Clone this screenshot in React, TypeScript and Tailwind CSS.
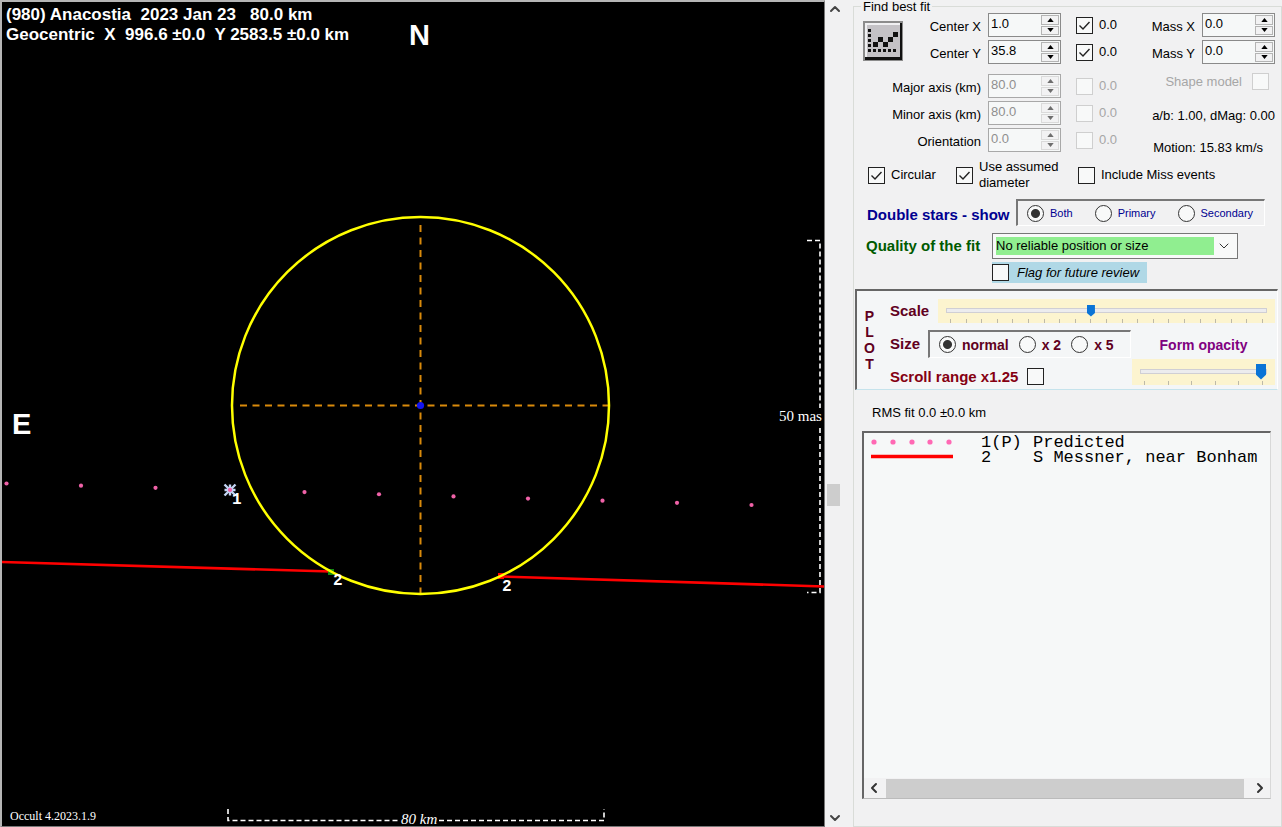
import React from 'react';
import { ChevronDown, ChevronLeft, ChevronRight, ChevronUp } from 'lucide-react';

interface SpinBoxProps {
  id: string;
  value: string;
  disabled?: boolean;
}

const SpinBox: React.FC<SpinBoxProps> = ({ id, value, disabled }) => (
  <div
    className={`flex h-6 w-[73px] shrink-0 border bg-[#f6f8f8] p-px ${
      disabled ? 'border-[#a8a8a8] text-[#8f8f8f]' : 'border-[#8a8a8a] text-black'
    }`}
  >
    <input
      id={id}
      type="text"
      defaultValue={value}
      disabled={disabled}
      className="h-4 w-0 min-w-0 flex-1 bg-transparent pt-px pl-px leading-4 outline-none"
    />
    <div className="flex w-[18px] flex-col gap-px">
      {['up', 'down'].map((dir) => (
        <button
          key={dir}
          type="button"
          disabled={disabled}
          aria-label={`${id} ${dir}`}
          className={`flex flex-1 items-center justify-center border bg-[#f2f2f3] ${
            disabled ? 'border-[#dadada] text-[#6e6e6e]' : 'border-[#b4b4b4] text-black'
          }`}
        >
          <svg viewBox="0 0 8 5" className="h-[4px] w-[7px]" fill="currentColor">
            <path d={dir === 'up' ? 'M4 0 8 5H0Z' : 'M0 0H8L4 5Z'} />
          </svg>
        </button>
      ))}
    </div>
  </div>
);

interface TickProps {
  id: string;
  checked?: boolean;
  disabled?: boolean;
}

const Tick: React.FC<TickProps> = ({ id, checked, disabled }) => (
  <span className="relative block size-[17px] shrink-0">
    <input
      id={id}
      type="checkbox"
      defaultChecked={checked}
      disabled={disabled}
      className="peer block size-full appearance-none border border-[#222] bg-[#f8f9f9] disabled:border-[#cfcfcf]"
    />
    <svg
      viewBox="0 0 17 17"
      className="pointer-events-none absolute inset-0 hidden size-full peer-checked:block"
      fill="none"
      stroke="#222"
      strokeWidth="1.4"
    >
      <path d="M3.5 8.5 7 12l6.5-7" />
    </svg>
  </span>
);

interface RadioProps {
  name: string;
  label: string;
  checked?: boolean;
}

const Radio: React.FC<RadioProps> = ({ name, label, checked }) => (
  <label className="flex items-center gap-1.5">
    <input
      type="radio"
      name={name}
      defaultChecked={checked}
      className="size-[17px] shrink-0 appearance-none rounded-full border border-[#333] bg-[#f8f9f9] checked:bg-[radial-gradient(circle,#333_0,#333_4px,#f8f9f9_5px)]"
    />
    {label}
  </label>
);

interface FitRowProps {
  label: string;
  value: string;
  checked?: boolean;
  disabled?: boolean;
}

const FitRow: React.FC<FitRowProps> = ({ label, value, checked, disabled }) => (
  <div className="flex h-6 items-center justify-end">
    <label htmlFor={label} className="pt-1 pr-[7px] whitespace-nowrap">
      {label}
    </label>
    <SpinBox id={label} value={value} disabled={disabled} />
    <div className="flex items-center gap-1.5 pl-[15px]">
      <Tick id={`${label} fit`} checked={checked} disabled={disabled} />
      <label htmlFor={`${label} fit`} className={disabled ? 'w-5 text-[#a6a6a6]' : 'w-5'}>
        0.0
      </label>
    </div>
  </div>
);

interface SliderProps {
  id: string;
  max: number;
  value: number;
  thumb: string;
}

const Slider: React.FC<SliderProps> = ({ id, max, value, thumb }) => (
  <div className="bg-[#fcf4cf] px-2 pt-0.5">
    <input
      id={id}
      type="range"
      max={max}
      defaultValue={value}
      className={`block w-full appearance-none bg-transparent [&::-webkit-slider-runnable-track]:h-[5px] [&::-webkit-slider-runnable-track]:border [&::-webkit-slider-runnable-track]:border-[#d0cfd4] [&::-webkit-slider-runnable-track]:bg-[#ececee] [&::-webkit-slider-thumb]:appearance-none [&::-webkit-slider-thumb]:bg-[#0a74d6] [&::-webkit-slider-thumb]:[clip-path:polygon(0_0,100%_0,100%_70%,50%_100%,0_70%)] ${thumb}`}
    />
    <div className="flex justify-between px-1">
      {Array.from({ length: max + 1 }, (_, i) => (
        <span key={i} className="h-[4px] w-px bg-[#bdb9a8]" />
      ))}
    </div>
  </div>
);

const dots = Array.from({ length: 11 }, (_, i) => ({ x: 6.5 + i * 74.5, y: 483.5 + i * 2.15 }));

const Plot: React.FC = () => (
  <main className="relative min-w-0 flex-1 border-t-2 border-r border-b border-l-2 border-t-[#b5b5b5] border-r-[#777] border-b-[#777] border-l-[#b5b5b5] bg-black text-white">
    <svg viewBox="2 2 822 824" className="absolute inset-0 size-full" fill="none">
      <g stroke="#d98a0b" strokeWidth="2" strokeDasharray="7 5.5">
        <path d="M240 405.5H608" />
        <path d="M420.5 225V594" />
      </g>
      <path d="M0 562 331 571.5M501 576.5 826 586.5" stroke="#f00" strokeWidth="2.6" />
      <rect x="328" y="569" width="6" height="6" fill="#128a12" />
      <rect x="498" y="573" width="6" height="6" fill="#f00" />
      <circle cx="420.5" cy="405.5" r="188.5" stroke="#ff0" strokeWidth="2.5" />
      <circle cx="420.5" cy="405.5" r="3.6" fill="#1414f0" />
      <path
        d="M224.500 484.500l11 11M235.500 484.500l-11 11M230 484.500v11M224.500 490h11"
        stroke="#c3d4f4"
        strokeWidth="2.4"
      />
      {dots.map((dot) => (
        <circle key={dot.x} cx={dot.x} cy={dot.y} r="2.1" fill="#f062a8" />
      ))}
      <g stroke="#fff" strokeWidth="1.6" strokeDasharray="5 3">
        <path d="M807 240.500H820V408M820 428V592.500H807" />
        <path d="M228 809V820.500H398M439 820.500H604V809" />
      </g>
      <g fill="#fff" className="font-['Liberation_Serif',serif] text-[15px]">
        <text x="779" y="421">50 mas</text>
        <text x="401" y="824" fontStyle="italic">80 km</text>
        <text x="10" y="820" className="text-[12px]">Occult 4.2023.1.9</text>
      </g>
      <g fill="#fff" className="font-['Liberation_Mono',monospace] text-[16px] font-bold">
        <text x="232" y="504">1</text>
        <text x="333" y="585">2</text>
        <text x="502" y="591">2</text>
      </g>
      <g fill="#fff" className="text-[29px] font-bold">
        <text x="409" y="45">N</text>
        <text x="12" y="434">E</text>
      </g>
    </svg>
    <h1 className="relative px-1 pt-[3px] text-[17px] leading-5 font-bold whitespace-pre">
      {'(980) Anacostia  2023 Jan 23   80.0 km\nGeocentric  X  996.6 ±0.0  Y 2583.5 ±0.0 km'}
    </h1>
  </main>
);

const FitIcon: React.FC = () => (
  <svg viewBox="0 0 40 40" className="size-10">
    <path d="M0 0H40V40H0Z" fill="#8c8c8c" />
    <path d="M2 2H37V36H2Z" fill="#f0f0f2" />
    <path d="M4 4H37V36H4Z" fill="#c4c2c6" />
    <path d="M37 2H39V39H2V36H37Z" fill="#111" />
    <path
      d="M5 8h3v3H5zM5 13h3v3H5zM5 18h3v3H5zM5 23h3v3H5zM5 28h3v3H5zM10 28h3v3h-3zM15 28h3v3h-3zM20 28h3v3h-3zM25 28h3v3h-3zM30 28h3v3h-3zM10 21h5v5h-5zM15 16h5v5h-5zM20 21h5v5h-5zM25 16h5v5h-5zM30 11h5v5h-5z"
      fill="#111"
    />
  </svg>
);

const FitSection: React.FC = () => (
  <>
    <div className="flex justify-between pt-px pr-1.5 pl-[9px]">
      <div className="flex flex-col gap-[3px]">
        <div className="flex justify-between">
          <button type="button" aria-label="Find best fit" className="mt-2 size-10">
            <FitIcon />
          </button>
          <div className="flex flex-col gap-[3px]">
            <FitRow label="Center X" value="1.0" checked />
            <FitRow label="Center Y" value="35.8" checked />
          </div>
        </div>
        <div className="flex w-64 flex-col gap-[3px] pt-[7px]">
          <FitRow label="Major axis (km)" value="80.0" disabled />
          <FitRow label="Minor axis (km)" value="80.0" disabled />
          <FitRow label="Orientation" value="0.0" disabled />
        </div>
      </div>
      <div className="flex flex-col items-end gap-[3px]">
        {['Mass X', 'Mass Y'].map((label) => (
          <div key={label} className="flex items-center gap-[7px]">
            <label htmlFor={label} className="pt-1">
              {label}
            </label>
            <SpinBox id={label} value="0.0" />
          </div>
        ))}
        <div className="flex items-center gap-2.5 pt-1.5 pr-1.5">
          <label htmlFor="shape" className="text-[#a6a6a6]">
            Shape model
          </label>
          <Tick id="shape" disabled />
        </div>
        <p className="pt-[15px]">a/b: 1.00, dMag: 0.00</p>
        <p className="pt-[13px] pr-3">Motion: 15.83 km/s</p>
      </div>
    </div>

    <div className="flex items-center pt-[3px] pl-3.5">
      <Tick id="circular" checked />
      <label htmlFor="circular" className="w-[71px] pl-1.5">
        Circular
      </label>
      <Tick id="assumed" checked />
      <label htmlFor="assumed" className="w-[105px] pl-1.5">
        Use assumed
        <br />
        diameter
      </label>
      <Tick id="miss" />
      <label htmlFor="miss" className="pl-1.5">
        Include Miss events
      </label>
    </div>

    <div className="flex items-center pt-2 pr-4 pl-[13px]">
      <h2 className="w-[149px] pt-1 text-[15px] font-bold whitespace-nowrap text-[#000090]">Double stars - show</h2>
      <div className="flex h-[27px] flex-1 items-center gap-[22px] border-t-2 border-r border-b border-l-2 border-t-[#777] border-r-white border-b-white border-l-[#777] pl-[9px] text-[11px] text-[#000090]">
        <Radio name="star" label="Both" checked />
        <Radio name="star" label="Primary" />
        <Radio name="star" label="Secondary" />
      </div>
    </div>

    <div className="flex items-center pt-[7px] pr-[43px] pl-3">
      <label htmlFor="quality" className="w-[126px] text-[15px] font-bold text-[#005a00]">
        Quality of the fit
      </label>
      <div className="flex h-[26px] flex-1 items-center border border-[#777] bg-[#f8f9f9] p-[3px]">
        <select id="quality" className="h-full min-w-0 flex-1 appearance-none bg-[#90ee90] leading-4 outline-none">
          <option>No reliable position or size</option>
        </select>
        <ChevronDown className="mx-0.5 size-4 text-[#333]" strokeWidth={1.5} />
      </div>
    </div>

    <div className="flex pt-[3px] pl-[138px]">
      <div className="flex h-[21px] items-center bg-[#b0d8e6]">
        <Tick id="flag" />
        <label htmlFor="flag" className="px-2 italic">
          Flag for future review
        </label>
      </div>
    </div>
  </>
);

const PlotSection: React.FC = () => (
  <section className="mr-[3px] ml-px mt-1.5 flex h-[101px] border-t-2 border-r border-b border-l-2 border-t-[#666] border-r-white border-b-[#c5e3ec] border-l-[#666] bg-[#f4f6f7] font-bold text-[#600020]">
    <h2 className="flex w-[33px] flex-col items-center pt-[17px] pr-2 text-[14px] leading-4">
      {'PLOT'.split('').map((letter) => (
        <span key={letter}>{letter}</span>
      ))}
    </h2>
    <div className="flex flex-1 flex-col pr-0.5">
      <div className="flex items-center pt-2">
        <label htmlFor="scale" className="w-12 text-[15px]">
          Scale
        </label>
        <div className="flex-1">
          <Slider
            id="scale"
            max={20}
            value={9}
            thumb="h-[18px] [&::-webkit-slider-thumb]:-mt-1 [&::-webkit-slider-thumb]:h-3 [&::-webkit-slider-thumb]:w-2"
          />
        </div>
      </div>
      <div className="flex flex-1 justify-between">
        <div className="flex flex-col">
          <div className="flex items-center pt-[7px]">
            <h3 className="w-[38px] text-[15px]">Size</h3>
            <div className="flex h-7 w-[203px] items-center gap-2.5 border-t-2 border-r border-b border-l-2 border-t-[#777] border-r-white border-b-white border-l-[#777] pl-[9px] text-[14px]">
              <Radio name="size" label="normal" checked />
              <Radio name="size" label="x 2" />
              <Radio name="size" label="x 5" />
            </div>
          </div>
          <div className="flex items-center gap-[9px] pt-2.5 text-[15px] text-[#850012]">
            <label htmlFor="scroll">Scroll range x1.25</label>
            <Tick id="scroll" />
          </div>
        </div>
        <div className="flex w-[143px] flex-col pt-3.5">
          <label htmlFor="opacity" className="pb-1.5 text-center text-[14px] text-[#800080]">
            Form opacity
          </label>
          <Slider
            id="opacity"
            max={5}
            value={5}
            thumb="h-[20px] [&::-webkit-slider-thumb]:-mt-1.5 [&::-webkit-slider-thumb]:h-4 [&::-webkit-slider-thumb]:w-2.5"
          />
        </div>
      </div>
    </div>
  </section>
);

const chords = [
  { id: '1(P)', name: 'Predicted', predicted: true },
  { id: '2', name: 'S Messner, near Bonham', predicted: false },
];

const ChordList: React.FC = () => (
  <div className="mr-2.5 mb-[27px] ml-2 flex min-h-0 flex-1 flex-col border-t-2 border-r border-b border-l-2 border-t-[#666] border-r-[#d8d8d8] border-b-[#bbb] border-l-[#666] bg-[#f6f8f8]">
    <ul className="flex-1 overflow-hidden pt-0.5 pl-[7px] font-['Liberation_Mono',monospace] text-[17px] leading-[15px] whitespace-nowrap">
      {chords.map((chord) => (
        <li key={chord.id} className="flex items-center">
          <svg viewBox="0 0 82 15" className="h-[15px] w-[82px]">
            {chord.predicted ? (
              [3, 22, 41, 59, 78].map((x) => <circle key={x} cx={x} cy="7" r="2.6" fill="#ff69b4" />)
            ) : (
              <path d="M0 6.500H82" stroke="#f00" strokeWidth="3.4" />
            )}
          </svg>
          <span className="ml-7 w-[52px]">{chord.id}</span>
          <span>{chord.name}</span>
        </li>
      ))}
    </ul>
    <div className="flex h-5 items-center gap-1 bg-[#f2f2f3] px-0.5">
      <button type="button" aria-label="Scroll left">
        <ChevronLeft className="size-4 text-[#333]" strokeWidth={3} />
      </button>
      <div className="mr-1 h-[19px] flex-1 bg-[#cdcdcd]" />
      <button type="button" aria-label="Scroll right">
        <ChevronRight className="size-4 text-[#333]" strokeWidth={3} />
      </button>
    </div>
  </div>
);

const App: React.FC = () => {
  return (
    <div className="flex h-screen min-h-[640px] bg-[#f1f1f2] font-['Liberation_Sans',sans-serif] text-[13px] leading-4 text-black">
      <Plot />
      <div className="flex w-7 flex-col items-start pl-0.5">
        <button type="button" aria-label="Scroll up" className="py-px">
          <ChevronUp className="size-4 text-[#444]" strokeWidth={3} />
        </button>
        <div className="grow-[20]" />
        <div className="h-[22px] w-[13px] bg-[#cdcdcd]" />
        <div className="grow-[13]" />
        <button type="button" aria-label="Scroll down" className="py-px">
          <ChevronDown className="size-4 text-[#444]" strokeWidth={3} />
        </button>
      </div>
      <fieldset className="flex w-1/3 min-w-[429px] flex-col border border-[#d9dcd8]">
        <legend className="ml-[7px] h-3 px-0.5 leading-[14px]">Find best fit</legend>
        <FitSection />
        <PlotSection />
        <p className="pt-[15px] pb-2.5 pl-[18px]">RMS fit 0.0 ±0.0 km</p>
        <ChordList />
      </fieldset>
    </div>
  );
};

export default App;
